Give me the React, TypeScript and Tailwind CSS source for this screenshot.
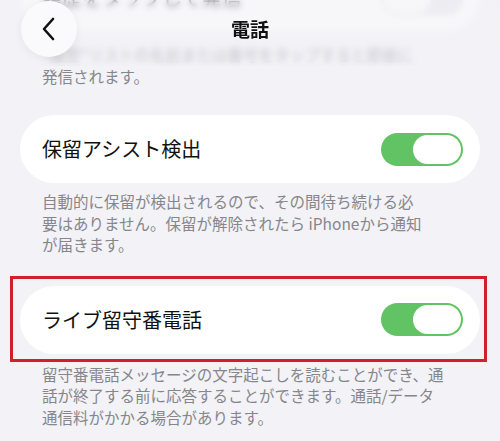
import React from "react";

function Toggle({ on = true }: { on?: boolean }) {
  return (
    <div
      className={
        on
          ? "flex h-[33px] w-[82px] shrink-0 items-center justify-end rounded-full bg-[#62c364] p-[2px]"
          : "flex h-[33px] w-[82px] shrink-0 items-center justify-start rounded-full bg-[#e4e4e9] p-[2px]"
      }
    >
      <div className="h-[29px] w-[48px] rounded-full bg-white" />
    </div>
  );
}

function Row({ label, on = true }: { label: string; on?: boolean }) {
  return (
    <div className="flex h-[68px] items-center justify-between rounded-full bg-white pl-[22px] pr-[17px]">
      <span className="text-[20px] leading-none text-[#111]">{label}</span>
      <Toggle on={on} />
    </div>
  );
}

function Note({ lines, className = "" }: { lines: string[]; className?: string }) {
  return (
    <div className={"pl-[22px] text-[15.5px] leading-[21.5px] text-[#86868b] " + className}>
      {lines.map((l) => (
        <div key={l} className="whitespace-nowrap">
          {l}
        </div>
      ))}
    </div>
  );
}

export default function App() {
  return (
    <div className="relative h-[441px] w-[500px] overflow-hidden bg-[#f2f2f7] font-['Noto_Sans_CJK_JP',sans-serif]">
      <div className="px-5">
        <div className="-mt-[36px]">
          <Row label="履歴をタップして発信" on={false} />
        </div>
        <Note
          className="mt-[12px]"
          lines={["“履歴”リストの名前または番号をタップすると即座に", "発信されます。"]}
        />

        <div className="mt-[28px]">
          <Row label="保留アシスト検出" />
        </div>
        <Note
          className="mt-[8px]"
          lines={[
            "自動的に保留が検出されるので、その間待ち続ける必",
            "要はありません。保留が解除されたら iPhoneから通知",
            "が届きます。",
          ]}
        />

        <div className="relative mt-[30px]">
          <div className="h-[67px]">
            <Row label="ライブ留守番電話" />
          </div>
          <div className="pointer-events-none absolute -bottom-[9px] -left-[10px] -right-[7px] -top-[10px] border-[3px] border-[#d0202c]" />
        </div>
        <Note
          className="mt-[11px]"
          lines={[
            "留守番電話メッセージの文字起こしを読むことができ、通",
            "話が終了する前に応答することができます。通話/データ",
            "通信料がかかる場合があります。",
          ]}
        />
      </div>

      {/* frosted nav bar */}
      <div className="absolute inset-x-0 top-0 h-[66px] bg-[#f2f2f7]/60 backdrop-blur-[3px]" />

      <button
        type="button"
        className="absolute left-[21px] top-[1px] flex h-[56px] w-[56px] items-center justify-center rounded-full bg-[#fafafc] shadow-[0_2px_10px_rgba(0,0,0,0.06)]"
      >
        <svg width="16" height="24" viewBox="0 0 16 24" fill="none">
          <path d="M12 2 L3 12 L12 22" stroke="#111" strokeWidth="2.6" strokeLinecap="round" strokeLinejoin="round" />
        </svg>
      </button>

      <div className="absolute inset-x-0 top-[17px] text-center text-[19px] font-bold leading-[24px] text-[#111]">
        電話
      </div>
    </div>
  );
}
